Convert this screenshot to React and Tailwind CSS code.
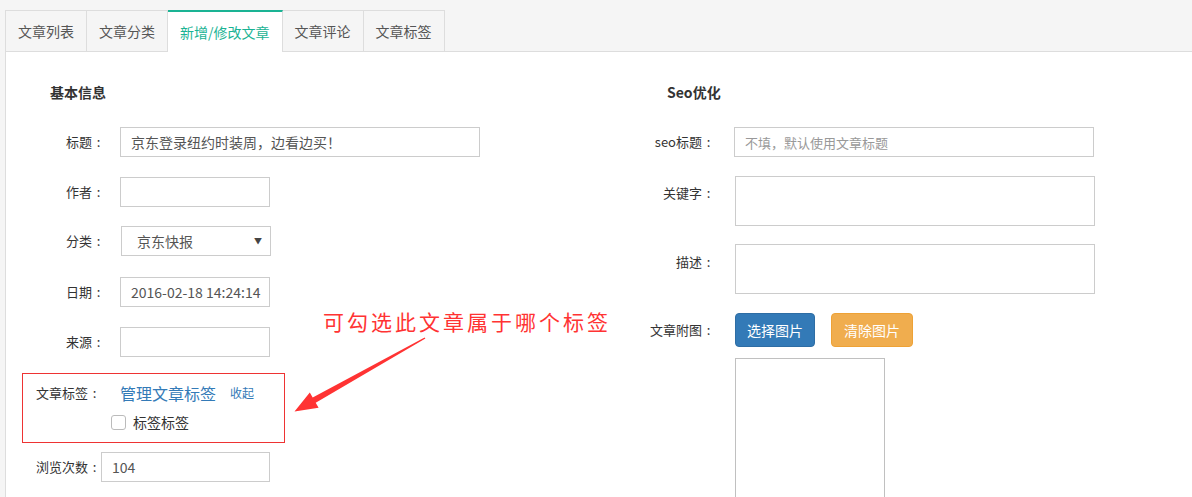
const tabs = ['文章列表', '文章分类', '新增/修改文章', '文章评论', '文章标签'];

const font = { fontFamily: '"Noto Sans CJK SC", "Noto Sans", sans-serif' };

const Colon = () => <span className="inline-block w-[13px] text-center">:</span>;

const Label = ({ children, className = '' }) => (
  <div className={`w-[99px] shrink-0 text-right text-[13px] leading-[30px] text-[#333] ${className}`}>
    {children}
    <Colon />
  </div>
);

const TextInput = ({ value, placeholder, className = '' }) => (
  <div
    className={`h-[30px] border border-[#ccc] bg-white pl-[10px] text-[14px] leading-[28px] text-[#555] overflow-hidden whitespace-nowrap ${className}`}
  >
    {value ? value : <span className="text-[13px] text-[#999]">{placeholder}</span>}
  </div>
);

const Row = ({ label, children, className = '' }) => (
  <div className={`flex items-start ${className}`}>
    <Label>{label}</Label>
    <div className="ml-[15px]">{children}</div>
  </div>
);

export default function App() {
  return (
    <div className="relative h-[497px] overflow-hidden bg-[#f5f5f5] pl-[5px] pt-[10px]" style={font}>
      <div className="border-l border-[#ddd] bg-white">
        {/* tabs */}
        <div className="flex h-[42px] border-b border-[#ddd] bg-[#f5f5f5]">
          {tabs.map((t, i) => {
            const active = i === 2;
            return (
              <div
                key={t}
                className={
                  active
                    ? '-mb-px flex h-[42px] items-center border-r border-t-2 border-[#ddd] border-t-[#1ab394] bg-white px-[12px] text-[14px] text-[#1ab394]'
                    : 'flex h-[41px] items-center border-r border-t border-[#ddd] bg-[#f5f5f5] px-[12px] text-[14px] text-[#555]'
                }
              >
                {t}
              </div>
            );
          })}
        </div>

        <div className="flex pt-[30px]">
          {/* left column */}
          <div className="w-[594px] shrink-0">
            <div className="pl-[44px] text-[14px] font-bold leading-[20px] text-[#333]">基本信息</div>
            <Row label="标题" className="mt-[25px]">
              <TextInput value="京东登录纽约时装周，边看边买！" className="w-[360px]" />
            </Row>
            <Row label="作者" className="mt-[20px]">
              <TextInput className="w-[150px]" />
            </Row>
            <Row label="分类" className="mt-[19px]">
              <div className="ml-px flex h-[30px] w-[150px] items-center justify-between border border-[#ccc] bg-white pl-[15px] pr-[8px] text-[14px] text-[#555]">
                <span>京东快报</span>
                <span className="text-[8px] text-[#444]">▼</span>
              </div>
            </Row>
            <Row label="日期" className="mt-[21px]">
              <TextInput value="2016-02-18 14:24:14" className="w-[150px]" />
            </Row>
            <Row label="来源" className="mt-[20px]">
              <TextInput className="w-[150px]" />
            </Row>

            <div className="ml-[16px] mt-[16px] h-[70px] w-[263px] border border-[#e33] pl-[13px] pt-[9px]">
              <div className="flex h-[20px] items-center">
                <span className="text-[13px] text-[#333]">
                  文章标签<Colon />
                </span>
                <a className="ml-[19px] text-[16px] text-[#337ab7]">管理文章标签</a>
                <a className="ml-[14px] text-[12px] text-[#337ab7]">收起</a>
              </div>
              <div className="mt-[9px] flex h-[20px] items-center pl-[75px]">
                <span className="h-[15px] w-[15px] rounded-[3px] border border-[#bbb] bg-white" />
                <span className="ml-[7px] text-[14px] text-[#333]">标签标签</span>
              </div>
            </div>

            <div className="mt-[9px] flex items-start pl-[30px]">
              <div className="text-[13px] leading-[30px] text-[#333]">
                浏览次数<Colon />
              </div>
              <TextInput value="104" className="w-[169px]" />
            </div>
          </div>

          {/* right column */}
          <div className="flex-1">
            <div className="pl-[67px] text-[14px] font-bold leading-[20px] text-[#333]">Seo优化</div>
            <div className="mt-[25px] flex items-start">
              <Label className="w-[115px]">seo标题</Label>
              <TextInput placeholder="不填，默认使用文章标题" className="ml-[19px] w-[360px]" />
            </div>
            <div className="mt-[19px] flex items-start">
              <Label className="w-[115px] pt-[2px]">关键字</Label>
              <div className="ml-[20px] h-[50px] w-[360px] border border-[#ccc] bg-white" />
            </div>
            <div className="mt-[18px] flex items-start">
              <Label className="w-[115px] pt-[3px]">描述</Label>
              <div className="ml-[20px] h-[50px] w-[360px] border border-[#ccc] bg-white" />
            </div>
            <div className="mt-[19px] flex items-start">
              <Label className="w-[115px] pt-[2px]">文章附图</Label>
              <div className="ml-[20px] flex gap-[16px]">
                <button className="h-[34px] w-[80px] rounded-[4px] border border-[#2e6da4] bg-[#337ab7] text-[14px] text-white">
                  选择图片
                </button>
                <button className="h-[34px] w-[82px] rounded-[4px] border border-[#eea236] bg-[#f0ad4e] text-[14px] text-white">
                  清除图片
                </button>
              </div>
            </div>
            <div className="ml-[135px] mt-[11px] h-[200px] w-[150px] border border-[#c0c0c0] bg-white" />
          </div>
        </div>
      </div>

      {/* annotation */}
      <div className="absolute left-[323px] top-[306px] text-[21px] leading-[30px] tracking-[3px] text-[#ff3333]">
        可勾选此文章属于哪个标签
      </div>
      <svg className="absolute left-0 top-0" width="1192" height="497" viewBox="0 0 1192 497">
        <polygon
          points="424.6,337.5 312.7,397.6 309.8,392.6 294.5,411.5 318.6,407.8 315.7,402.8 425.4,338.5"
          fill="#ff3333"
        />
      </svg>
    </div>
  );
}
